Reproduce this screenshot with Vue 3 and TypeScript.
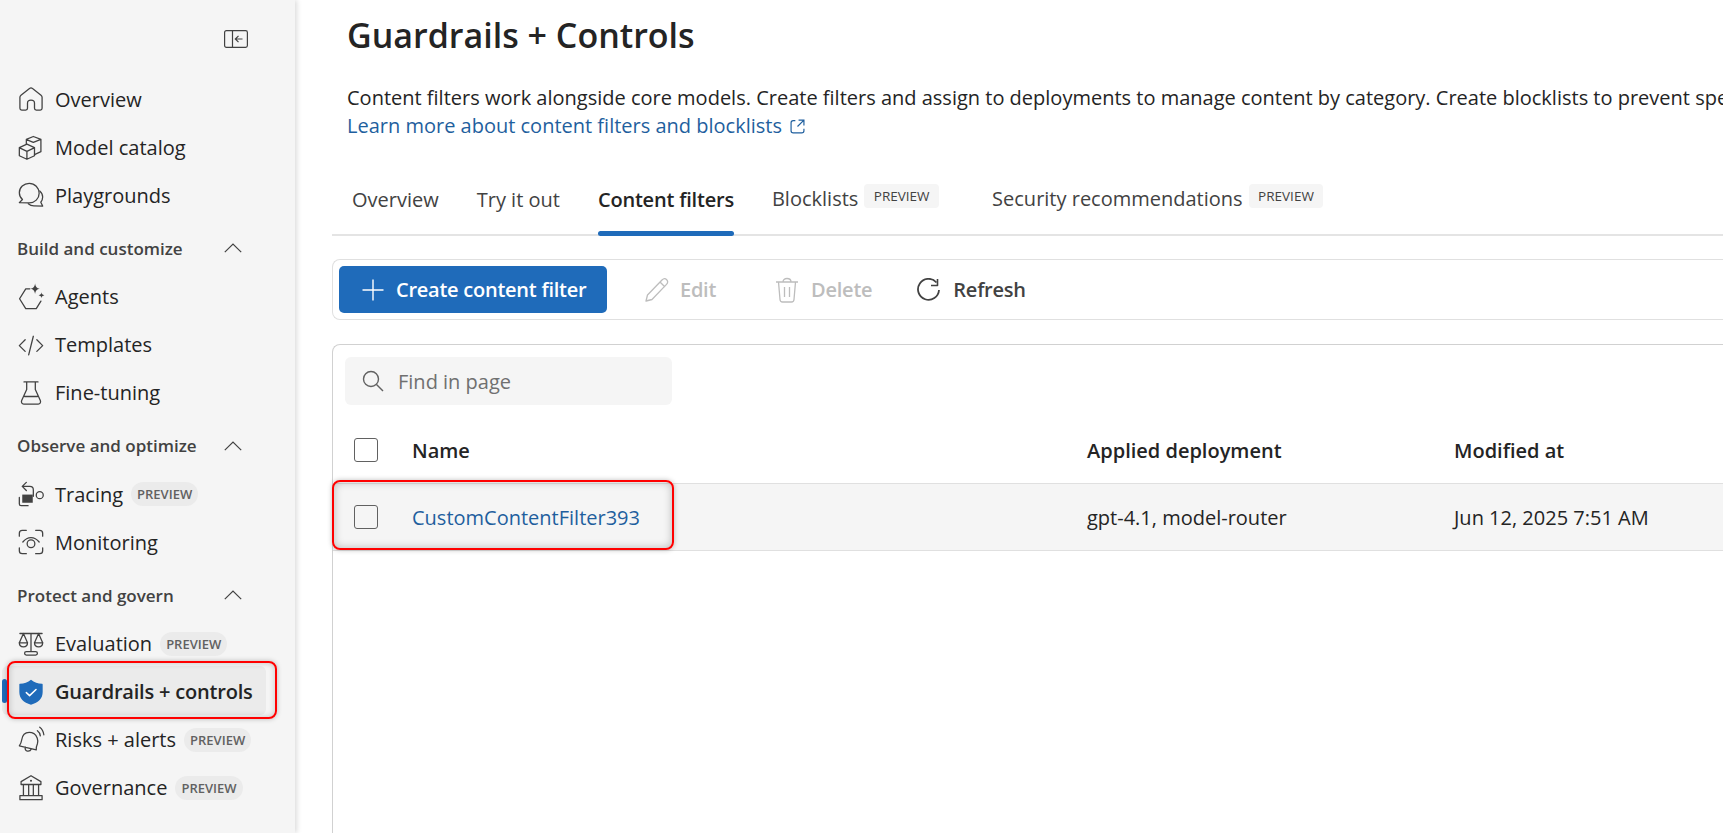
<script setup lang="ts">
type NavItem = { label: string; icon: string; preview?: boolean; active?: boolean }
type NavGroup = { title?: string; items: NavItem[] }

const groups: NavGroup[] = [
  {
    items: [
      { label: 'Overview', icon: 'home' },
      { label: 'Model catalog', icon: 'cube' },
      { label: 'Playgrounds', icon: 'chat' },
    ],
  },
  {
    title: 'Build and customize',
    items: [
      { label: 'Agents', icon: 'agent' },
      { label: 'Templates', icon: 'code' },
      { label: 'Fine-tuning', icon: 'flask' },
    ],
  },
  {
    title: 'Observe and optimize',
    items: [
      { label: 'Tracing', icon: 'trace', preview: true },
      { label: 'Monitoring', icon: 'eye' },
    ],
  },
  {
    title: 'Protect and govern',
    items: [
      { label: 'Evaluation', icon: 'scale', preview: true },
      { label: 'Guardrails + controls', icon: 'shield', active: true },
      { label: 'Risks + alerts', icon: 'bell', preview: true },
      { label: 'Governance', icon: 'bank', preview: true },
    ],
  },
]
</script>

<template>
  <div class="page">
    <aside class="sidebar">
      <div class="collapse">
        <svg width="24" height="18" viewBox="0 0 24 18" fill="none" stroke="#424242" stroke-width="1.2">
          <rect x="0.6" y="0.6" width="22.8" height="16.8" rx="1.8" />
          <path d="M8.5 1v16M18.5 9h-7M14.5 5.8 11.3 9l3.2 3.2" />
        </svg>
      </div>
      <section v-for="(group, g) in groups" :key="g" class="group">
        <h3 v-if="group.title" class="group__title">
          {{ group.title }}
          <svg width="18" height="10" viewBox="0 0 18 10" fill="none" stroke="#424242" stroke-width="1.2">
            <path d="M0.8 9.2 9 1l8.2 8.2" />
          </svg>
        </h3>
        <div v-for="item in group.items" :key="item.label" class="nav" :class="{ 'nav--active': item.active }">
          <span v-if="item.active" class="nav__bar"></span>
          <svg class="nav__icon" width="28" height="28" viewBox="0 0 24 24" fill="none" stroke="#424242" stroke-width="1.1" stroke-linejoin="round" stroke-linecap="round">
            <template v-if="item.icon === 'home'">
              <path d="M4 21.5c-1 0-1.5-.6-1.5-1.5v-9.500c0-.8.3-1.300.9-1.800L10.700 3c.8-.6 1.800-.6 2.600 0l7.300 5.700c.6.5.9 1 .9 1.800V20c0 .9-.5 1.500-1.500 1.500h-3.500c-1 0-1.500-.6-1.500-1.500v-4.500c0-1.300-1-2.500-3-2.500s-3 1.200-3 2.500V20c0 .9-.5 1.500-1.500 1.500Z" />
            </template>
            <template v-else-if="item.icon === 'cube'">
              <path d="M2 12.500 8.500 9.500l6.500 3v7l-6.500 3-6.500-3ZM2.300 12.700l6.200 3 6.200-3M8.500 15.700v6.500" />
              <path d="M8 9.500V5.500L14 3l6.500 2.500-6.500 2.600-5.800-2.400M20.500 5.500v10.500l-5.500 2.500" />
            </template>
            <template v-else-if="item.icon === 'chat'">
              <path d="M10.500 2C5.800 2 2 5.500 2 10c0 2.400 1 4.300 2.700 5.800L2 18.500l8.500.3c4.700 0 8.500-3.700 8.500-8.300S15.200 2 10.500 2Z" />
              <path d="M19.500 8.500c1.800 1.500 2.500 3.500 2.500 5.300 0 1.700-.6 3.200-1.600 4.400l1.600 3.300-7.500-.2c-2 0-3.500-.6-4.800-1.800" />
            </template>
            <template v-else-if="item.icon === 'agent'">
              <path d="M11 5H7.500L2.200 13.500 7.500 22h9l4-6.500" />
              <path d="M15.500 0.500c.5 3 1.500 4 4 4.500-2.500.5-3.500 1.500-4 4.500-.5-3-1.500-4-4-4.500 2.500-.5 3.500-1.500 4-4.500ZM21 8c.2 1.500.8 2.100 2.500 2.500-1.700.4-2.300 1-2.500 2.500-.2-1.500-.8-2.100-2.500-2.500 1.700-.4 2.300-1 2.500-2.500Z" fill="#424242" stroke="none" />
            </template>
            <template v-else-if="item.icon === 'code'">
              <path d="M7 7.500 2 12.500l5 5M17 7.500l5 5-5 5M14 4.500 10 20.500" />
            </template>
            <template v-else-if="item.icon === 'flask'">
              <path d="M6 2.500h12M8.300 2.500V9L4 18.500c-.6 1.500.2 3 1.800 3h12.400c1.600 0 2.400-1.500 1.800-3L15.700 9V2.500M6.500 15h11" />
            </template>
            <template v-else-if="item.icon === 'trace'">
              <path d="M8 2 4.500 5.500 8 9M4.500 5.500H11c2 0 3 1.200 3 3v5.500" />
              <circle cx="19.500" cy="13" r="3" />
              <rect x="4.500" y="12.500" width="9" height="7" fill="#424242" stroke="none" />
              <path d="M2 15v5.500c0 1 .6 1.500 1.500 1.500H9.500" />
            </template>
            <template v-else-if="item.icon === 'eye'">
              <path d="M2 7V4.500C2 3 3 2 4.500 2H8M16 2h3.500C21 2 22 3 22 4.500V7M2 17v2.500C2 21 3 22 4.500 22H8M16 22h3.500c1.500 0 2.500-1 2.500-2.500V17" />
              <path d="M5 12c2-2.500 4.300-3.800 7-3.800s5 1.300 7 3.800" />
              <circle cx="12" cy="13.500" r="3.300" />
            </template>
            <template v-else-if="item.icon === 'scale'">
              <path d="M2.500 3h19M12 3v15M8 18.500h8c1 0 1.500.6 1.500 1.500s-.5 1.500-1.500 1.500H8c-1 0-1.500-.6-1.500-1.500s.5-1.500 1.500-1.500Z" />
              <path d="M5.500 3 2 11h7L5.500 3ZM18.500 3 15 11h7l-3.500-8Z" />
              <path d="M2 11c0 2 1.500 3.500 3.500 3.500S9 13 9 11M15 11c0 2 1.500 3.500 3.500 3.500S22 13 22 11" />
            </template>
            <template v-else-if="item.icon === 'shield'">
              <path d="M12 1.500c2.800 2.300 5.800 3.300 9.500 3.500.4 0 .5.200.5.500v6.500c0 5.500-3.500 9-10 11C5.500 21 2 17.500 2 12V5.500c0-.3.1-.5.500-.5C6.200 4.800 9.200 3.800 12 1.500Z" fill="#1f6bba" stroke="none" />
              <path d="M8 12.500l2.800 2.600L16.300 9.800" stroke="#fff" stroke-width="1.300" />
            </template>
            <template v-else-if="item.icon === 'bell'">
              <path d="M10.500 5.500c-4 0-6 3-6.500 6.500-.3 2-.9 3.500-2 5l14.500 3.500c-.2-2.300.3-3.700 1-5.300 1-3.200-.5-7-3-8.700-1.500-.9-2.800-1-4-1ZM7 18c-.3 2 .5 3.300 2 3.500s2.700-.5 3.300-1.800" />
              <path d="M17.500 4c1.500 1 2.300 2.700 2.500 4.500M19.500 1c2 1.500 3.200 4 3.500 6.500" />
            </template>
            <template v-else-if="item.icon === 'bank'">
              <path d="M12 1.500 3.500 6.500v2.500h17V6.500L12 1.500ZM5.500 9v9M10 9v9M14 9v9M18.500 9v9M3.500 18.500h17M2.500 22h19v-3.500h-19Z" />
              <circle cx="12" cy="5.800" r="0.9" fill="#424242" stroke="none" />
            </template>
          </svg>
          <span class="nav__label">{{ item.label }}</span>
          <span v-if="item.preview" class="nav__badge">PREVIEW</span>
        </div>
      </section>
    </aside>

    <main class="main">
      <h1 class="title">Guardrails + Controls</h1>
      <p class="desc">Content filters work alongside core models. Create filters and assign to deployments to manage content by category. Create blocklists to prevent specific terms from appearing in content.</p>
      <a class="learn">
        Learn more about content filters and blocklists
        <svg width="15" height="15" viewBox="0 0 14 14" fill="none" stroke="#1f5f9e" stroke-width="1.1">
          <path d="M5 1.500H3C1.900 1.500 1 2.400 1 3.500v7.500c0 1.100.9 2 2 2h8c1.100 0 2-.9 2-2V9M8 1h5v5M13 1 7 7" />
        </svg>
      </a>

      <nav class="tabs">
        <span class="tab">Overview</span>
        <span class="tab">Try it out</span>
        <span class="tab tab--active">Content filters</span>
        <span class="tab tab--up">Blocklists <i class="tab__badge">PREVIEW</i></span>
        <span class="tab tab--up">Security recommendations <i class="tab__badge">PREVIEW</i></span>
      </nav>

      <div class="toolbar">
        <button class="primary">
          <svg width="24" height="24" viewBox="0 0 24 24" fill="none" stroke="#fff" stroke-width="1.400"><path d="M12 1.500v21M1.500 12h21" /></svg>
          Create content filter
        </button>
        <button class="tool tool--off tool--edit">
          <svg width="26" height="26" viewBox="0 0 26 26" fill="none" stroke="#bdbdbd" stroke-width="1.300" stroke-linejoin="round">
            <path d="M2 24l1.500-6L18 3c1.500-1.500 3.500-1.500 4.700-.3 1.300 1.300 1.300 3.200-.2 4.700L8 22.500 2 24ZM16 5l5 5" />
          </svg>
          Edit
        </button>
        <button class="tool tool--off tool--delete">
          <svg width="24" height="26" viewBox="0 0 24 26" fill="none" stroke="#bdbdbd" stroke-width="1.300" stroke-linejoin="round">
            <path d="M1 5h22M8 5c0-2 1.500-3.500 4-3.500S16 3 16 5M3.500 5l1.500 17.500c.1 1.500 1 2.500 2.500 2.500h9c1.500 0 2.400-1 2.500-2.500L20.500 5M9.500 10v10M14.500 10v10" />
          </svg>
          Delete
        </button>
        <button class="tool">
          <svg width="24" height="24" viewBox="0 0 24 24" fill="none" stroke="#424242" stroke-width="1.800" stroke-linejoin="round">
            <path d="M19.500 4.500A10.500 10.500 0 1 0 22 12" />
            <path d="M20.500 1v6.500H14" stroke-width="1.600" />
          </svg>
          Refresh
        </button>
      </div>

      <section class="card">
        <div class="search">
          <svg width="22" height="22" viewBox="0 0 22 22" fill="none" stroke="#616161" stroke-width="1.400">
            <circle cx="9" cy="9" r="7.500" /><path d="m14.500 14.500 6.500 6.500" />
          </svg>
          <span>Find in page</span>
        </div>
        <div class="row row--head">
          <span class="row__check"><i class="box"></i></span>
          <span class="col col--name">Name</span>
          <span class="col col--dep">Applied deployment</span>
          <span class="col">Modified at</span>
        </div>
        <div class="row row--item">
          <span class="row__check"><i class="box"></i></span>
          <span class="col col--name link">CustomContentFilter393</span>
          <span class="col col--dep">gpt-4.1, model-router</span>
          <span class="col">Jun 12, 2025 7:51 AM</span>
          <div class="callout"></div>
        </div>
      </section>
    </main>
  </div>
</template>

<style>
html,
body {
  margin: 0;
  overflow: hidden;
}
</style>

<style scoped>
.page {
  display: flex;
  width: 1723px;
  height: 833px;
  overflow: hidden;
  background: #fff;
  font-family: 'Open Sans', 'Noto Sans', sans-serif;
  color: #242424;
}

.sidebar {
  flex: none;
  box-sizing: border-box;
  width: 295px;
  height: 833px;
  background: #f5f5f5;
  box-shadow: 2px 0 5px rgba(0, 0, 0, 0.14);
  padding: 30px 0 0 17px;
}

.collapse {
  display: flex;
  justify-content: flex-end;
  padding-right: 47px;
  height: 18px;
  margin-bottom: 27px;
}

.group__title {
  display: flex;
  justify-content: space-between;
  align-items: center;
  margin: 0;
  height: 22px;
  padding: 18px 53px 13.5px 0;
  font-size: 17px;
  font-weight: 600;
  color: #424242;
}

.nav {
  position: relative;
  display: flex;
  align-items: center;
  height: 48px;
  font-size: 20px;
}

.nav__icon {
  flex: none;
  margin-right: 10px;
}

.nav__label {
  white-space: nowrap;
}

.nav__badge {
  margin-left: 8px;
  padding: 0 6px;
  height: 24px;
  line-height: 24px;
  border-radius: 12px;
  background: #ebebeb;
  color: #616161;
  font-size: 13px;
  font-weight: 600;
}

.nav--active {
  font-weight: 600;
  letter-spacing: -0.2px;
  color: #242424;
}

.nav--active::before {
  content: '';
  position: absolute;
  left: -15px;
  right: 29px;
  top: -2px;
  bottom: 1px;
  border-radius: 6px;
  background: #ebebeb;
}

.nav--active::after {
  content: '';
  position: absolute;
  left: -10px;
  top: -7px;
  width: 270px;
  height: 58px;
  border: 2px solid #f00;
  border-radius: 8px;
  box-shadow: 0 0 5px rgba(0, 0, 0, 0.25), inset 0 0 6px rgba(0, 0, 0, 0.2);
  box-sizing: border-box;
}

.nav__bar {
  position: absolute;
  left: -15px;
  top: 11px;
  width: 5px;
  height: 24px;
  border-radius: 3px;
  background: #1f6bba;
}

.nav--active .nav__icon,
.nav--active .nav__label {
  position: relative;
}

.main {
  flex: 1;
  min-width: 0;
  padding: 0 0 0 52px;
}

.title {
  margin: 13px 0 0;
  font-size: 34px;
  line-height: 44px;
  font-weight: 600;
  color: #242424;
}

.desc {
  margin: 27px 0 0;
  font-size: 20px;
  line-height: 28px;
  white-space: nowrap;
}

.learn {
  display: flex;
  align-items: center;
  gap: 8px;
  font-size: 20px;
  line-height: 28px;
  color: #1f5f9e;
}

.tabs {
  display: flex;
  align-items: flex-start;
  margin: 24px 0 0 -15px;
  padding-left: 20px;
  height: 70px;
  border-bottom: 2px solid #e4e4e4;
  font-size: 20px;
}

.tab {
  position: relative;
  display: flex;
  align-items: center;
  height: 70px;
  margin-right: 38px;
  color: #424242;
  white-space: nowrap;
}

.tab--active {
  font-weight: 600;
  letter-spacing: -0.2px;
  color: #242424;
}

.tab--active::after {
  content: '';
  position: absolute;
  left: 0;
  right: 0;
  bottom: -2px;
  height: 5px;
  border-radius: 3px;
  background: #1f6bba;
}

.tab--up {
  height: 68px;
  gap: 6px;
  margin-right: 53px;
}

.tab__badge {
  font-style: normal;
  font-size: 13.5px;
  line-height: 24px;
  padding: 0 9.5px;
  border-radius: 4px;
  background: #f5f5f5;
  position: relative;
  top: -2px;
}

.toolbar {
  display: flex;
  align-items: center;
  box-sizing: border-box;
  height: 61px;
  margin: 23px 0 0 -15px;
  padding: 0 0 0 6px;
  border: 1px solid #e0e0e0;
  border-right: 0;
  border-radius: 8px 0 0 8px;
}

button {
  display: flex;
  align-items: center;
  border: 0;
  background: none;
  font: inherit;
  font-size: 20px;
  font-weight: 600;
  letter-spacing: -0.25px;
  padding: 0;
}

.primary {
  gap: 11px;
  height: 47px;
  width: 268px;
  padding-left: 22px;
  margin-right: 37px;
  border-radius: 5px;
  background: #1f6bba;
  color: #fff;
}

.tool {
  gap: 12px;
  color: #424242;
}

.tool--off {
  color: #bdbdbd;
}

.tool--edit {
  gap: 10px;
  margin-right: 59px;
}

.tool--delete {
  margin-right: 45px;
}

.card {
  box-sizing: border-box;
  height: 500px;
  margin: 24px 0 0 -15px;
  padding-top: 12px;
  border: 1px solid #d1d1d1;
  border-right: 0;
  border-radius: 8px 0 0 0;
}

.search {
  display: flex;
  align-items: center;
  gap: 14px;
  width: 327px;
  height: 48px;
  margin-left: 12px;
  padding-left: 17px;
  box-sizing: border-box;
  border-radius: 6px;
  background: #f5f5f5;
  font-size: 20px;
  color: #707070;
}

.row {
  position: relative;
  display: flex;
  align-items: center;
  box-sizing: border-box;
  height: 67px;
  font-size: 20px;
  border-bottom: 1px solid #e0e0e0;
}

.row--head {
  margin-top: 12px;
  font-weight: 600;
}

.row--item {
  background: #f5f5f5;
}

.row__check {
  flex: none;
  width: 79px;
  padding-left: 21px;
  box-sizing: border-box;
}

.box {
  display: block;
  width: 24px;
  height: 24px;
  box-sizing: border-box;
  border: 1px solid #616161;
  border-radius: 3px;
  background: #fff;
}

.row--item .box {
  background: #f5f5f5;
}

.col {
  white-space: nowrap;
}

.col--name {
  width: 675px;
}

.col--dep {
  width: 367px;
}

.link {
  color: #1f5f9e;
}

.callout {
  position: absolute;
  box-sizing: border-box;
  left: -1px;
  top: -4px;
  width: 342px;
  height: 70px;
  border: 2px solid #f00;
  border-radius: 8px;
  box-shadow: 0 0 5px rgba(0, 0, 0, 0.25), inset 0 0 8px rgba(0, 0, 0, 0.25);
}
</style>
